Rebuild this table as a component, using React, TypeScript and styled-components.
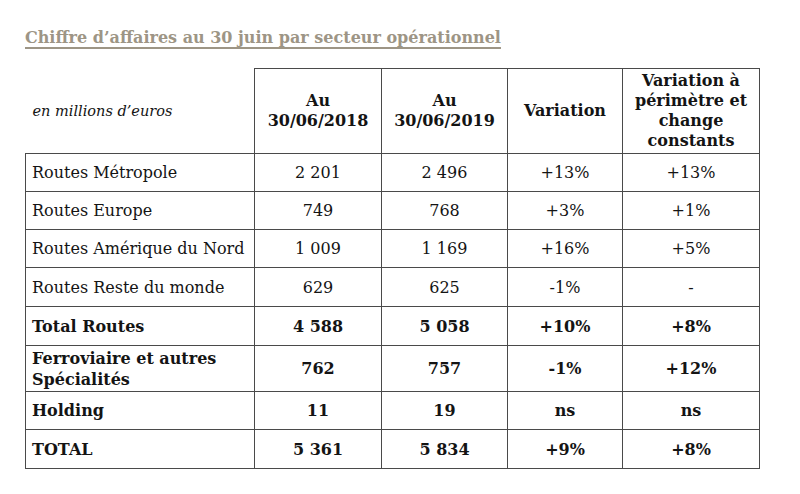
import { createGlobalStyle, styled } from "styled-components";

type Row = {
  label: string[];
  values: string[];
  bold?: boolean;
  height: number;
};

const rows: Array<Row> = [
  { label: ["Routes Métropole"], values: ["2 201", "2 496", "+13%", "+13%"], height: 38 },
  { label: ["Routes Europe"], values: ["749", "768", "+3%", "+1%"], height: 38 },
  { label: ["Routes Amérique du Nord"], values: ["1 009", "1 169", "+16%", "+5%"], height: 38 },
  { label: ["Routes Reste du monde"], values: ["629", "625", "-1%", "-"], height: 39 },
  { label: ["Total Routes"], values: ["4 588", "5 058", "+10%", "+8%"], bold: true, height: 39 },
  {
    label: ["Ferroviaire et autres", "Spécialités"],
    values: ["762", "757", "-1%", "+12%"],
    bold: true,
    height: 46,
  },
  { label: ["Holding"], values: ["11", "19", "ns", "ns"], bold: true, height: 38 },
  { label: ["TOTAL"], values: ["5 361", "5 834", "+9%", "+8%"], bold: true, height: 39 },
];

const colWidths = [229, 127, 126, 115, 137];

const GlobalStyle = createGlobalStyle`
  html, body {
    margin: 0;
    padding: 0;
    background: #ffffff;
  }
  body {
    font-family: "DejaVu Serif", "Liberation Serif", serif;
    color: #141414;
  }
`;

const Page = styled.div`
  width: 800px;
  height: 494px;
  padding: 26px 0 0 25px;
  box-sizing: border-box;
  overflow: hidden;
`;

const Title = styled.h2`
  margin: 0;
  font-size: 16px;
  font-weight: 700;
  line-height: 24px;
  color: #9d9585;
  text-decoration: underline;
  text-decoration-thickness: 2px;
  text-underline-offset: 4px;
  text-decoration-skip-ink: none;
`;

const Table = styled.table`
  margin-top: 18px;
  border-collapse: collapse;
  table-layout: fixed;
  font-size: 16px;
`;

const BORDER = "1.5px solid #4a4a4a";

const HeadCell = styled.th<{ $blank?: boolean }>`
  height: 84px;
  padding: 0 4px;
  border: ${(p) => (p.$blank ? "none" : BORDER)};
  border-bottom: ${BORDER};
  font-weight: 700;
  text-align: center;
  vertical-align: middle;
  line-height: 20px;
`;

const UnitLabel = styled.span`
  display: block;
  text-align: left;
  padding-left: 3px;
  font-size: 14.5px;
  font-style: italic;
  font-weight: 400;
`;

const Cell = styled.td<{ $bold?: boolean; $left?: boolean }>`
  border: ${BORDER};
  padding: 0 4px 0 ${(p) => (p.$left ? "6px" : "4px")};
  font-weight: ${(p) => (p.$bold ? 700 : 400)};
  text-align: ${(p) => (p.$left ? "left" : "center")};
  vertical-align: middle;
  line-height: 21px;
  white-space: nowrap;
`;

const App = () => {
  return (
    <Page>
      <GlobalStyle />
      <Title>Chiffre d’affaires au 30 juin par secteur opérationnel</Title>
      <Table>
        <colgroup>
          {colWidths.map((w, i) => (
            <col key={i} style={{ width: w }} />
          ))}
        </colgroup>
        <thead>
          <tr>
            <HeadCell $blank>
              <UnitLabel>en millions d’euros</UnitLabel>
            </HeadCell>
            <HeadCell>
              Au
              <br />
              30/06/2018
            </HeadCell>
            <HeadCell>
              Au
              <br />
              30/06/2019
            </HeadCell>
            <HeadCell>Variation</HeadCell>
            <HeadCell>
              Variation à
              <br />
              périmètre et
              <br />
              change
              <br />
              constants
            </HeadCell>
          </tr>
        </thead>
        <tbody>
          {rows.map((row, i) => (
            <tr key={i} style={{ height: row.height }}>
              <Cell $left $bold={row.bold}>
                {row.label.map((line, j) => (
                  <div key={j}>{line}</div>
                ))}
              </Cell>
              {row.values.map((v, j) => (
                <Cell key={j} $bold={row.bold}>
                  {v}
                </Cell>
              ))}
            </tr>
          ))}
        </tbody>
      </Table>
    </Page>
  );
};

export default App;
